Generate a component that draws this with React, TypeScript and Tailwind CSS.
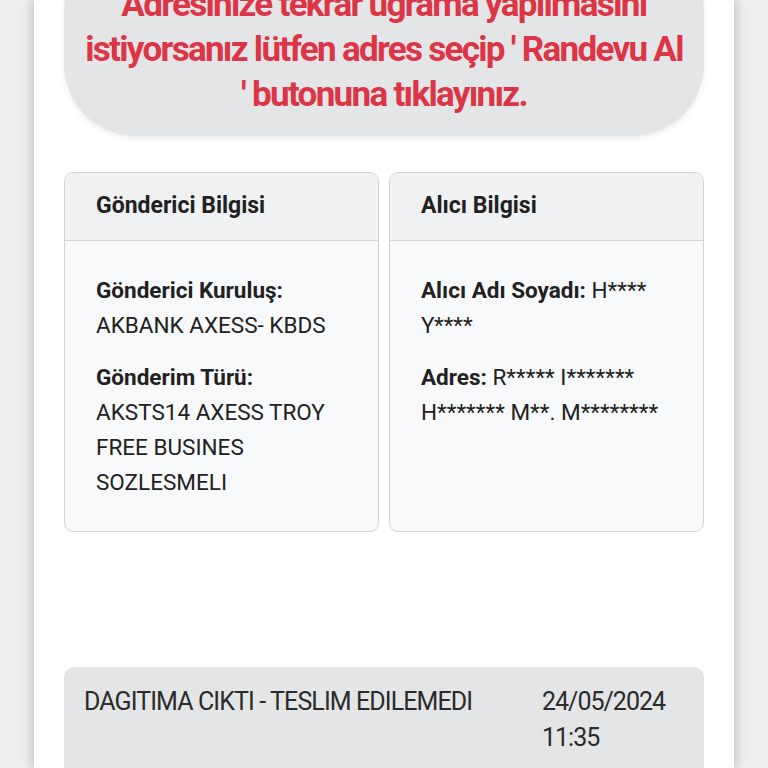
const sender = [
  { label: "Gönderici Kuruluş:", value: ["AKBANK AXESS- KBDS"] },
  { label: "Gönderim Türü:", value: ["AKSTS14 AXESS TROY", "FREE BUSINES", "SOZLESMELI"] },
];

function InfoCard({ title, children }: { title: string; children: React.ReactNode }) {
  return (
    <div className="flex-1 overflow-hidden rounded-[9px] border border-[#d4d4d6] bg-[#f8f9fa]">
      <div className="flex h-[68px] items-center border-b border-[#d4d4d6] bg-[#f0f1f2] px-[31px] text-[23px] font-bold text-[#212121]">
        {title}
      </div>
      <div className="h-[290px] px-[31px] pt-[32px] text-[22.5px] leading-[35px] text-[#212121]">{children}</div>
    </div>
  );
}

export default function App() {
  return (
    <div className="flex h-[768px] w-[768px] justify-center overflow-hidden bg-[#eeeeee] font-['Roboto',sans-serif]">
      <div className="w-[700px] bg-white px-[30px] shadow-[0_0_12px_rgba(0,0,0,0.25)]">
        <div className="mt-[-60px] rounded-[72px] bg-[#e4e5e7] px-[20px] pb-[19px] pt-[42px] text-center text-[35px] font-bold leading-[45px] tracking-[-1.7px] text-[#dc3545] shadow-[0_2px_6px_rgba(0,0,0,0.08)]">
          Adresinize tekrar uğrama yapılmasını istiyorsanız lütfen adres seçip ' Randevu Al ' butonuna tıklayınız.
        </div>

        <div className="mt-[36px] flex gap-[10px]">
          <InfoCard title="Gönderici Bilgisi">
            {sender.map((s) => (
              <div key={s.label} className="mb-[17px]">
                <div className="font-bold">{s.label}</div>
                {s.value.map((v) => (
                  <div key={v}>{v}</div>
                ))}
              </div>
            ))}
          </InfoCard>
          <InfoCard title="Alıcı Bilgisi">
            <p className="mb-[17px]">
              <span className="font-bold">Alıcı Adı Soyadı:</span> H**** Y****
            </p>
            <p>
              <span className="font-bold">Adres:</span> R***** I******* H******* M**. M********
            </p>
          </InfoCard>
        </div>

        <div className="mt-[135px] flex rounded-t-[10px] bg-[#e4e5e7] px-[20px] pb-[40px] pt-[17px] text-[25px] leading-[36px] text-[#2b2b2b]">
          <div className="w-[458px] tracking-[-0.9px]">DAGITIMA CIKTI - TESLIM EDILEMEDI</div>
          <div className="tracking-[-1px]">
            24/05/2024
            <br />
            11:35
          </div>
        </div>
      </div>
    </div>
  );
}
